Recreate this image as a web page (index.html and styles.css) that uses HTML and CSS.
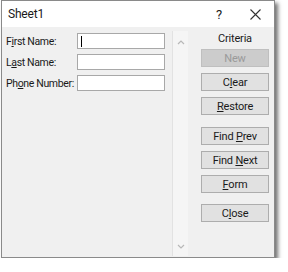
FILE: index.html
```html
<!DOCTYPE html>
<html>
<head>
  <title>Sheet1</title>
  <link rel="stylesheet" href="styles.css">
</head>
<body>
  <div class="dialog">
    <div class="titlebar">
      <span class="title">Sheet1</span>
      <span class="help">?</span>
      <svg class="close-x" width="11" height="11" viewBox="0 0 11 11">
        <path d="M0.5 0.5L10.5 10.5M10.5 0.5L0.5 10.5" stroke="#333" stroke-width="1.1" fill="none"/>
      </svg>
    </div>

    <div class="body">
      <div class="fields">
        <div class="row">
          <label>F<u>i</u>rst Name:</label>
          <div class="input"><span class="caret"></span></div>
        </div>
        <div class="row">
          <label>L<u>a</u>st Name:</label>
          <div class="input"></div>
        </div>
        <div class="row">
          <label>Ph<u>o</u>ne Number:</label>
          <div class="input"></div>
        </div>
      </div>

      <div class="scrollbar">
        <svg width="8" height="6" viewBox="0 0 8 6"><path d="M1 5L4 2L7 5" stroke="#b8b8b8" stroke-width="1.2" fill="none"/></svg>
        <svg width="8" height="6" viewBox="0 0 8 6"><path d="M1 1L4 4L7 1" stroke="#b8b8b8" stroke-width="1.2" fill="none"/></svg>
      </div>

      <div class="actions">
        <div class="criteria">Criteria</div>
        <button class="btn" disabled>New</button>
        <button class="btn">C<u>l</u>ear</button>
        <button class="btn"><u>R</u>estore</button>
        <button class="btn spaced">Find <u>P</u>rev</button>
        <button class="btn">Find <u>N</u>ext</button>
        <button class="btn"><u>F</u>orm</button>
        <button class="btn spaced-sm">C<u>l</u>ose</button>
      </div>
    </div>
  </div>
</body>
</html>
```

FILE: styles.css
```css
body {
  margin: 0;
  background: #fff;
  font-family: Roboto, "Liberation Sans", sans-serif;
  font-size: 11px;
  letter-spacing: -0.2px;
  color: #1a1a1a;
}
.dialog {
  margin-left: 1px;
  width: 272px;
  height: 256px;
  border: 1px solid #8a8a8a;
  background: #f0f0f0;
  display: flex;
  flex-direction: column;
  box-shadow: 3px 3px 4px rgba(0, 0, 0, 0.55);
}
.titlebar {
  height: 26px;
  background: #fff;
  display: flex;
  align-items: center;
  padding-left: 6px;
  flex-shrink: 0;
}
.title {
  font-size: 12px;
  flex: 1;
}
.help {
  font-size: 13px;
  width: 10px;
  margin-right: 24px;
}
.close-x {
  margin-right: 13px;
}
.body {
  flex: 1;
  display: flex;
  padding: 0 5px 0 4px;
}
.fields {
  width: 159px;
  padding-top: 6px;
  display: flex;
  flex-direction: column;
  gap: 5px;
}
.row {
  display: flex;
  align-items: center;
  height: 16px;
}
.row label {
  width: 71px;
  flex-shrink: 0;
  white-space: nowrap;
  font-size: 10.5px;
  letter-spacing: -0.35px;
}
.input {
  width: 86px;
  height: 14px;
  background: #fff;
  border: 1px solid #a8a8a8;
  position: relative;
}
.caret {
  position: absolute;
  left: 3px;
  top: 2px;
  width: 1px;
  height: 11px;
  background: #000;
}
.scrollbar {
  width: 15px;
  margin: 4px 13px 1px 7px;
  border-left: 1px solid #e2e2e2;
  background: #f5f5f5;
  display: flex;
  flex-direction: column;
  justify-content: space-between;
  align-items: center;
  padding: 8px 0 6px;
}
.actions {
  width: 68px;
  padding-top: 4px;
  display: flex;
  flex-direction: column;
  gap: 6px;
}
.criteria {
  text-align: center;
  height: 15px;
  line-height: 15px;
  margin-bottom: -3px;
}
.btn {
  height: 18px;
  padding: 0;
  font-family: inherit;
  font-size: 11px;
  letter-spacing: -0.2px;
  color: #1a1a1a;
  background: #e1e1e1;
  border: 1px solid #adadad;
}
.btn:disabled {
  background: #cccccc;
  border-color: #bfbfbf;
  color: #9a9a9a;
}
.spaced {
  margin-top: 6px;
}
.spaced-sm {
  margin-top: 5px;
}
```
